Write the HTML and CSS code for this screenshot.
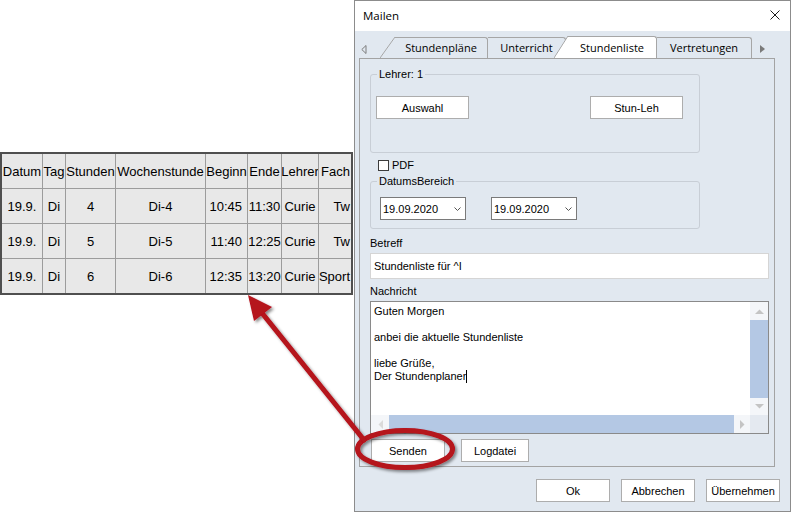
FILE: index.html
```html
<!DOCTYPE html>
<html lang="de">
<head>
    <meta charset="UTF-8">
    <title>Mailen</title>
    <link rel="stylesheet" href="styles.css">
</head>
<body>
    <!-- Stundenliste (Ausschnitt) -->
    <div class="list-clip">
        <div class="list-row head">
            <div class="cell">Datum</div>
            <div class="cell">Tag</div>
            <div class="cell">Stunden</div>
            <div class="cell">Wochenstunde</div>
            <div class="cell">Beginn</div>
            <div class="cell">Ende</div>
            <div class="cell">Lehrer</div>
            <div class="cell fach-head">Fach</div>
        </div>
        <div class="list-row">
            <div class="cell">19.9.</div>
            <div class="cell">Di</div>
            <div class="cell">4</div>
            <div class="cell">Di-4</div>
            <div class="cell right">10:45</div>
            <div class="cell">11:30</div>
            <div class="cell">Curie</div>
            <div class="cell fach">Tw</div>
        </div>
        <div class="list-row">
            <div class="cell">19.9.</div>
            <div class="cell">Di</div>
            <div class="cell">5</div>
            <div class="cell">Di-5</div>
            <div class="cell right">11:40</div>
            <div class="cell">12:25</div>
            <div class="cell">Curie</div>
            <div class="cell fach">Tw</div>
        </div>
        <div class="list-row last">
            <div class="cell">19.9.</div>
            <div class="cell">Di</div>
            <div class="cell">6</div>
            <div class="cell">Di-6</div>
            <div class="cell right">12:35</div>
            <div class="cell">13:20</div>
            <div class="cell">Curie</div>
            <div class="cell fach">Sport</div>
        </div>
    </div>

    <!-- Dialog -->
    <div class="dialog">
        <div class="titlebar">
            <span>Mailen</span>
            <svg class="close" width="10" height="10" viewBox="0 0 10 10">
                <path d="M0.5 0.5 L9.5 9.5 M9.5 0.5 L0.5 9.5" stroke="#1a1a1a" stroke-width="1" fill="none"/>
            </svg>
        </div>

        <div class="tabstrip">
            <div class="tab-nav prev">
                <svg width="6" height="9" viewBox="0 0 6 9">
                    <polygon points="5,0.5 0.8,4.5 5,8.5" fill="none" stroke="#7d7d7d" stroke-width="1"/>
                </svg>
            </div>
            <div class="tab slanted tab-1">Stundenpläne</div>
            <div class="tab tab-2">Unterricht</div>
            <div class="tab slanted active tab-3">Stundenliste</div>
            <div class="tab tab-4">Vertretungen</div>
            <div class="tab-nav next">
                <svg width="5" height="8" viewBox="0 0 5 8">
                    <polygon points="0,0 5,4 0,8" fill="#7a7a7a"/>
                </svg>
            </div>
        </div>

        <div class="panel">
            <fieldset class="group group-lehrer">
                <legend>Lehrer: 1</legend>
                <div class="group-buttons">
                    <button class="btn wide">Auswahl</button>
                    <button class="btn wide">Stun-Leh</button>
                </div>
            </fieldset>

            <label class="check"><span class="check-box"></span>PDF</label>

            <fieldset class="group group-datum">
                <legend>DatumsBereich</legend>
                <div class="combos">
                    <div class="combo">
                        <span>19.09.2020</span>
                        <svg width="7" height="4" viewBox="0 0 7 4"><path d="M0.5 0.5 L3.5 3.5 L6.5 0.5" stroke="#555" fill="none"/></svg>
                    </div>
                    <div class="combo">
                        <span>19.09.2020</span>
                        <svg width="7" height="4" viewBox="0 0 7 4"><path d="M0.5 0.5 L3.5 3.5 L6.5 0.5" stroke="#555" fill="none"/></svg>
                    </div>
                </div>
            </fieldset>

            <div class="field-label">Betreff</div>
            <div class="edit">Stundenliste für ^I</div>

            <div class="field-label second">Nachricht</div>
            <div class="memo">
                <div class="memo-text">Guten Morgen

anbei die aktuelle Stundenliste

liebe Grüße,
Der Stundenplaner<span class="caret"></span></div>
                <div class="vscroll">
                    <div class="sb-btn up">
                        <svg width="9" height="5" viewBox="0 0 9 5"><polygon points="0,5 4.5,0.5 9,5" fill="#c4c4c4"/></svg>
                    </div>
                    <div class="vthumb"></div>
                    <div class="sb-btn down">
                        <svg width="9" height="5" viewBox="0 0 9 5"><polygon points="0,0 4.5,4.5 9,0" fill="#c4c4c4"/></svg>
                    </div>
                </div>
                <div class="hscroll">
                    <div class="sb-btn hleft">
                        <svg width="5" height="9" viewBox="0 0 5 9"><polygon points="5,0 0.5,4.5 5,9" fill="#dadada"/></svg>
                    </div>
                    <div class="hthumb"></div>
                    <div class="sb-btn hright">
                        <svg width="5" height="9" viewBox="0 0 5 9"><polygon points="0,0 4.5,4.5 0,9" fill="#c4c4c4"/></svg>
                    </div>
                </div>
                <div class="corner"></div>
            </div>

            <div class="panel-buttons">
                <button class="btn">Senden</button>
                <button class="btn log">Logdatei</button>
            </div>
        </div>

        <div class="dialog-buttons">
            <button class="btn">Ok</button>
            <button class="btn">Abbrechen</button>
            <button class="btn">Übernehmen</button>
        </div>
    </div>

    <!-- Markierung: Pfeil und Kreis -->
    <svg class="callout" width="791" height="513" viewBox="0 0 791 513">
        <defs>
            <filter id="shadow" x="-20%" y="-20%" width="140%" height="140%">
                <feDropShadow dx="2" dy="2" stdDeviation="1.5" flood-color="#000" flood-opacity="0.45"/>
            </filter>
        </defs>
        <g filter="url(#shadow)">
            <ellipse cx="405" cy="449" rx="47.5" ry="18.5" fill="none" stroke="#b5121b" stroke-width="5"/>
            <line x1="262" y1="313" x2="364" y2="440" stroke="#b5121b" stroke-width="5" stroke-linecap="round"/>
            <polygon points="248,295 272,307 254,321" fill="#b5121b"/>
        </g>
    </svg>
</body>
</html>
```

FILE: styles.css
```css
body {
    margin: 0;
    width: 791px;
    height: 513px;
    background: #fff;
    display: flex;
    align-items: flex-start;
    position: relative;
    overflow: hidden;
}

/* Stundenliste */
.list-clip {
    margin-top: 152px;
    width: 353px;
    box-sizing: border-box;
    border: 2px solid #4f4f4f;
    overflow: hidden;
    background: #e8e8e8;
    font: 13px "Liberation Sans", Arial, sans-serif;
    color: #000;
}

.list-row {
    display: grid;
    grid-template-columns: 41px 23px 50px 90px 42px 34px 37px 32px;
    height: 35px;
}

.list-row.last {
    height: 34px;
}

.cell {
    box-sizing: border-box;
    border-right: 1px solid #9c9c9c;
    border-bottom: 1px solid #9c9c9c;
    display: flex;
    align-items: center;
    justify-content: center;
    white-space: nowrap;
    overflow: hidden;
}

.list-row.last .cell {
    border-bottom: none;
}

.cell.right {
    justify-content: flex-end;
    padding-right: 5px;
}

.cell.fach,
.cell.fach-head {
    border-right: none;
}

.cell.fach {
    justify-content: flex-end;
    padding-right: 1px;
}

.cell.fach-head {
    justify-content: flex-start;
    padding-left: 2px;
}

/* Dialog */
.dialog {
    margin-left: 1px;
    width: 437px;
    height: 512px;
    box-sizing: border-box;
    border: 1px solid #8c8c8c;
    background: #e1e8f0;
    display: flex;
    flex-direction: column;
    font: 11px "Liberation Sans", Arial, sans-serif;
    color: #000;
}

.titlebar {
    height: 30px;
    background: #fff;
    display: flex;
    align-items: center;
    justify-content: space-between;
    padding: 0 10px 2px 8px;
    box-sizing: border-box;
    font: 11.5px "Open Sans", sans-serif;
}

/* Tabs */
.tabstrip {
    display: flex;
    align-items: flex-end;
    height: 22px;
    margin-top: 5px;
    font: 11px "Open Sans", sans-serif;
}

.tab-nav {
    display: flex;
}

.tab-nav.prev {
    width: 40px;
    padding-left: 6px;
    box-sizing: border-box;
    margin-bottom: 4px;
}

.tab-nav.next {
    margin-left: 8px;
    margin-bottom: 5px;
}

.tab {
    position: relative;
    height: 21px;
    box-sizing: border-box;
    border-top: 1px solid #a6a6a6;
    border-right: 1px solid #a6a6a6;
    border-top-right-radius: 3px;
    text-align: center;
    line-height: 19px;
    white-space: nowrap;
}

.tab.slanted::before {
    content: "";
    position: absolute;
    left: -15px;
    top: -1px;
    width: 15px;
    height: calc(100% + 1px);
    background: linear-gradient(to bottom right, transparent calc(50% - 0.8px), #a6a6a6 50%, transparent calc(50% + 0.8px));
}

.tab.active {
    height: 22px;
    padding-top: 1px;
    background: #fff;
    margin-left: 2px;
}

.tab.active::before {
    left: -14px;
    width: 14px;
    background: linear-gradient(to bottom right, transparent calc(50% - 0.8px), #a6a6a6 50%, #fff calc(50% + 0.8px));
}

.tab-1 { width: 93px; }
.tab-2 { width: 78px; }
.tab-3 { width: 89px; }
.tab-4 { width: 95px; }

/* Panel */
.panel {
    margin: 0 15px 0 4px;
    height: 409px;
    box-sizing: border-box;
    border: 1px solid #a3a3a3;
    padding: 0 5px 0 10px;
}

.group {
    width: 330px;
    box-sizing: border-box;
    margin: 0;
    min-width: 0;
    border: 1px solid #c8ced6;
    border-radius: 3px;
    padding: 0 16px 0 5px;
}

.group legend {
    padding: 0 2px;
    margin-left: 1px;
    line-height: 13px;
}

.group-lehrer {
    margin-top: 9px;
    padding-bottom: 33px;
}

.group-buttons {
    display: flex;
    justify-content: space-between;
    margin-top: 15px;
}

.btn {
    box-sizing: border-box;
    width: 74px;
    height: 23px;
    border: 1px solid #adadad;
    background: #fff;
    font: 11px "Liberation Sans", Arial, sans-serif;
    color: #000;
    padding: 0;
    margin: 0;
    display: flex;
    align-items: center;
    justify-content: center;
}

.btn.wide {
    width: 93px;
}

.check {
    display: flex;
    align-items: center;
    gap: 3px;
    height: 11px;
    margin: 7px 0 0 8px;
    line-height: 11px;
}

.check-box {
    width: 11px;
    height: 11px;
    box-sizing: border-box;
    border: 1px solid #3c3c3c;
    background: #fff;
}

.group-datum {
    margin-top: 4px;
    padding-bottom: 8px;
}

.combos {
    display: flex;
    gap: 25px;
    margin: 9px 0 0 4px;
}

.combo {
    width: 86px;
    height: 23px;
    box-sizing: border-box;
    border: 1px solid #7a7a7a;
    background: #fff;
    display: flex;
    align-items: center;
    justify-content: space-between;
    padding: 0 4px 0 2px;
}

.field-label {
    margin-top: 8px;
    line-height: 13px;
}

.field-label.second {
    margin-top: 6px;
}

.edit {
    margin-top: 3px;
    width: 399px;
    height: 26px;
    box-sizing: border-box;
    border: 1px solid #d5d5d5;
    background: #fff;
    padding-left: 3px;
    line-height: 24px;
}

/* Nachricht mit Scrollbalken */
.memo {
    margin-top: 3px;
    width: 399px;
    height: 133px;
    box-sizing: border-box;
    border: 1px solid #8a8a8a;
    background: #fff;
    display: grid;
    grid-template-columns: 1fr 18px;
    grid-template-rows: 1fr 18px;
}

.memo-text {
    padding: 3px 0 0 3px;
    line-height: 13px;
    white-space: pre;
    overflow: hidden;
}

.caret {
    display: inline-block;
    width: 1px;
    height: 13px;
    background: #000;
    vertical-align: top;
}

.vscroll {
    display: flex;
    flex-direction: column;
    background: #f4f6f9;
}

.hscroll {
    display: flex;
    background: #f4f6f9;
}

.sb-btn {
    display: flex;
    align-items: center;
    justify-content: center;
}

.sb-btn.up { height: 18px; }
.sb-btn.down { height: 17px; }
.sb-btn.hleft { width: 18px; }
.sb-btn.hright { width: 16px; }

.vthumb {
    flex: 1;
    background: #b4c8e4;
}

.hthumb {
    flex: 1;
    background: #b4c8e4;
}

.corner {
    background: #e4e9f0;
}

.panel-buttons {
    display: flex;
    gap: 16px;
    margin: 5px 0 0 1px;
}

.btn.log {
    width: 68px;
}

.dialog-buttons {
    display: flex;
    justify-content: flex-end;
    gap: 11px;
    margin: 12px 10px 0 0;
}

/* Markierung */
.callout {
    position: absolute;
    left: 0;
    top: 0;
    pointer-events: none;
}
```
